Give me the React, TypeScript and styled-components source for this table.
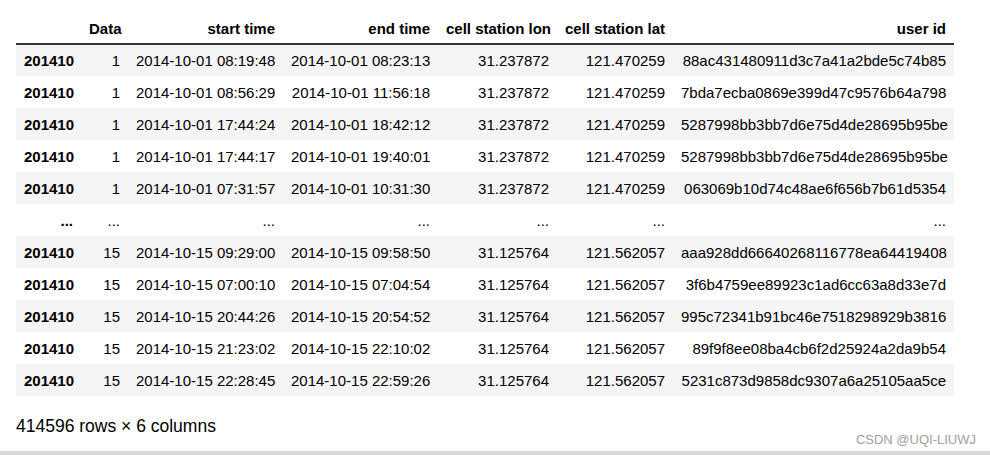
import React from "react";
import styled, { createGlobalStyle } from "styled-components";

const Global = createGlobalStyle`
  html, body { margin: 0; padding: 0; background: #fff; }
  body { font-family: "Liberation Sans", Arial, sans-serif; color: #000; }
`;

const Output = styled.div`
  box-sizing: border-box;
  height: 455px;
  border-bottom: 4px solid #dadada;
  padding: 13px 14px 0 16px;
  display: flex;
  flex-direction: column;
`;

const Table = styled.table`
  border-collapse: collapse;
  table-layout: fixed;
  width: 938px;
  font-size: 15px;
`;

const HeadRow = styled.tr`
  height: 31px;
  border-bottom: 2px solid #333;
`;

const HeadCell = styled.th`
  padding: 0 8px;
  text-align: right;
  font-weight: bold;
  white-space: nowrap;
  vertical-align: middle;
`;

const BodyRow = styled.tr<{ $stripe: boolean }>`
  height: 32px;
  background: ${(p) => (p.$stripe ? "#f5f5f5" : "#fff")};
`;

const IndexCell = styled.th`
  padding: 0 8px;
  text-align: right;
  font-weight: bold;
  white-space: nowrap;
`;

const Cell = styled.td`
  padding: 0 8px;
  text-align: right;
  white-space: nowrap;
`;

const Footer = styled.div`
  display: flex;
  justify-content: space-between;
  align-items: flex-start;
  margin-top: 20px;
`;

const Shape = styled.p`
  margin: 0;
  font-size: 17.5px;
  line-height: 20px;
`;

const Watermark = styled.span`
  margin-top: 16px;
  font-size: 13px;
  line-height: 15px;
  color: #a0a0a0;
`;

const widths = [65, 47, 155, 155, 119, 116, 281];
const headers = ["", "Data", "start time", "end time", "cell station lon", "cell station lat", "user id"];

type Row = string[];
const rows: Row[] = [
  ["201410", "1", "2014-10-01 08:19:48", "2014-10-01 08:23:13", "31.237872", "121.470259", "88ac431480911d3c7a41a2bde5c74b85"],
  ["201410", "1", "2014-10-01 08:56:29", "2014-10-01 11:56:18", "31.237872", "121.470259", "7bda7ecba0869e399d47c9576b64a798"],
  ["201410", "1", "2014-10-01 17:44:24", "2014-10-01 18:42:12", "31.237872", "121.470259", "5287998bb3bb7d6e75d4de28695b95be"],
  ["201410", "1", "2014-10-01 17:44:17", "2014-10-01 19:40:01", "31.237872", "121.470259", "5287998bb3bb7d6e75d4de28695b95be"],
  ["201410", "1", "2014-10-01 07:31:57", "2014-10-01 10:31:30", "31.237872", "121.470259", "063069b10d74c48ae6f656b7b61d5354"],
  ["...", "...", "...", "...", "...", "...", "..."],
  ["201410", "15", "2014-10-15 09:29:00", "2014-10-15 09:58:50", "31.125764", "121.562057", "aaa928dd66640268116778ea64419408"],
  ["201410", "15", "2014-10-15 07:00:10", "2014-10-15 07:04:54", "31.125764", "121.562057", "3f6b4759ee89923c1ad6cc63a8d33e7d"],
  ["201410", "15", "2014-10-15 20:44:26", "2014-10-15 20:54:52", "31.125764", "121.562057", "995c72341b91bc46e7518298929b3816"],
  ["201410", "15", "2014-10-15 21:23:02", "2014-10-15 22:10:02", "31.125764", "121.562057", "89f9f8ee08ba4cb6f2d25924a2da9b54"],
  ["201410", "15", "2014-10-15 22:28:45", "2014-10-15 22:59:26", "31.125764", "121.562057", "5231c873d9858dc9307a6a25105aa5ce"],
];

export default function App() {
  return (
    <>
      <Global />
      <Output>
        <Table>
          <colgroup>
            {widths.map((w, i) => (
              <col key={i} style={{ width: w }} />
            ))}
          </colgroup>
          <thead>
            <HeadRow>
              {headers.map((h, i) => (
                <HeadCell key={i}>{h}</HeadCell>
              ))}
            </HeadRow>
          </thead>
          <tbody>
            {rows.map((r, i) => (
              <BodyRow key={i} $stripe={i % 2 === 0}>
                <IndexCell>{r[0]}</IndexCell>
                {r.slice(1).map((c, j) => (
                  <Cell key={j}>{c}</Cell>
                ))}
              </BodyRow>
            ))}
          </tbody>
        </Table>
        <Footer>
          <Shape>414596 rows × 6 columns</Shape>
          <Watermark>CSDN @UQI-LIUWJ</Watermark>
        </Footer>
      </Output>
    </>
  );
}
